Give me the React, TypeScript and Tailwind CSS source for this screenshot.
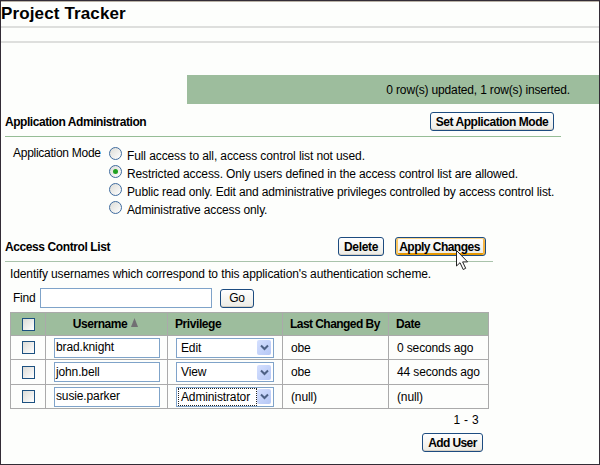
import React from "react";

function Radio({ checked = false }: { checked?: boolean }) {
  return (
    <span className="flex h-[13px] w-[13px] shrink-0 items-center justify-center rounded-full border border-[#3f6b9e] bg-linear-to-br from-[#dcdcd7] to-white">
      {checked && <span className="h-[5px] w-[5px] rounded-full bg-[#21a121]" />}
    </span>
  );
}

function Check() {
  return <span className="block h-[13px] w-[13px] border border-[#1c5180] bg-linear-to-br from-[#dcdcd7] to-white" />;
}

function Button({ className, children, hot = false }: { className: string; children: React.ReactNode; hot?: boolean }) {
  return (
    <button
      className={`flex shrink-0 items-center justify-center rounded-[3px] border border-[#1d4c80] whitespace-nowrap bg-linear-to-b from-white to-[#ecebe5] ${
        hot ? "shadow-[inset_0_1px_0_#fbd58b,inset_2px_0_0_#fac761,inset_-2px_0_0_#f5b544,inset_0_-2px_0_#e59700]" : "shadow-[inset_0_-1px_0_#d6d0c5]"
      } ${className}`}
    >
      {children}
    </button>
  );
}

function Select({ value, focused = false }: { value: string; focused?: boolean }) {
  return (
    <div className="flex h-5 w-[98px] items-center justify-between border border-[#7fa3c9] bg-white pr-[2px] pl-px">
      <span
        className={`flex h-[18px] w-[79px] items-center border border-dotted pl-[2px] whitespace-nowrap ${
          focused ? "border-[#222]" : "border-transparent"
        }`}
      >
        {value}
      </span>
      <span className="flex h-[15px] w-[14px] items-center justify-center rounded-[2px] bg-linear-to-br from-[#d5e0ff] to-[#b5c7f5]">
        <svg width="9" height="7" viewBox="0 0 9 7" fill="none" stroke="#4d6185" strokeWidth="2">
          <path d="M1 1.5 4.5 5 8 1.5" />
        </svg>
      </span>
    </div>
  );
}

const modes = [
  { label: "Full access to all, access control list not used.", tracking: "tracking-[-0.1px]" },
  { label: "Restricted access. Only users defined in the access control list are allowed.", tracking: "tracking-[-0.12px]", checked: true },
  { label: "Public read only. Edit and administrative privileges controlled by access control list.", tracking: "tracking-[-0.14px]" },
  { label: "Administrative access only.", tracking: "tracking-[-0.13px]" },
];

const users = [
  { name: "brad.knight", privilege: "Edit", by: "obe", date: "0 seconds ago" },
  { name: "john.bell", privilege: "View", by: "obe", date: "44 seconds ago" },
  { name: "susie.parker", privilege: "Administrator", by: "(null)", date: "(null)", focused: true },
];

const columns = "grid grid-cols-[35px_122px_115px_106px_100px]";

export default function App() {
  return (
    <div className="h-[465px] w-[600px] overflow-hidden border border-[#332c36] bg-[#fdfefc] font-['Liberation_Sans',Arial,sans-serif] text-[12px] leading-[14px] tracking-[-0.13px] text-black">
      <header className="border-t border-[#b9b2a6]">
        <h1 className="h-[24px] text-[17px] leading-[24px] font-bold tracking-[0.13px]">Project Tracker</h1>
        <div className="h-[17px] border-y-2 border-[#dedfdd]" />
      </header>

      <div className="mt-[32px] ml-[186px] flex h-[29px] items-center justify-end bg-[#9dbd9d] pr-[29px]">
        <span className="tracking-[-0.16px]">0 row(s) updated, 1 row(s) inserted.</span>
      </div>

      <section className="ml-1 w-[556px]">
        <div className="flex h-[33px] items-center justify-between border-b border-[#96bd96] pt-[3px] pr-[7px]">
          <h2 className="pt-px font-bold tracking-[-0.45px]">Application Administration</h2>
          <Button className="h-[19px] w-[124px] pt-px font-bold tracking-[-0.45px]">Set Application Mode</Button>
        </div>
        <div className="flex pt-[9px] pl-2">
          <span className="w-[96px] shrink-0 tracking-[-0.27px]">Application Mode</span>
          <div className="flex flex-col">
            {modes.map((m) => (
              <label key={m.label} className="flex h-[18px] items-start gap-[5px] pt-px whitespace-nowrap">
                <Radio checked={m.checked} />
                <span className={`pt-[2px] ${m.tracking}`}>{m.label}</span>
              </label>
            ))}
          </div>
        </div>
      </section>

      <section className="ml-1 w-[488px]">
        <div className="mt-[18px] flex h-[26px] items-start border-b border-[#a9c3ab] pr-[7px]">
          <h2 className="mt-[4px] flex-1 font-bold tracking-[-0.4px]">Access Control List</h2>
          <div className="flex pt-px">
            <Button className="h-[19px] w-[46px] font-bold tracking-[-0.3px]">Delete</Button>
            <div className="relative ml-[11px]">
              <Button hot className="h-[19px] w-[91px] pr-[2px] font-bold tracking-[-0.52px]">Apply Changes</Button>
              <svg className="absolute top-[13px] left-[61px]" width="13" height="21" viewBox="0 0 13 21">
                <path d="M.5.5v15.5l3.5-3.3 3.2 6.8 2.5-1.2-3.1-6.4h5z" fill="white" stroke="#222" />
              </svg>
            </div>
          </div>
        </div>
        <p className="mt-[5px] pl-[5px] tracking-[-0.11px] whitespace-nowrap">Identify usernames which correspond to this application's authentication scheme.</p>
        <div className="mt-[7px] flex h-5 items-center pl-2">
          <label className="w-[27px] tracking-[-0.25px]">Find</label>
          <span className="h-5 w-[172px] border border-[#7fa3c9] bg-white" />
          <Button className="ml-2 h-[19px] w-[34px]">Go</Button>
        </div>

        <div className="mt-1 ml-[5px] w-[479px] border-t border-l border-[#aaa]">
          <div className={`${columns} h-[23px] bg-[#9dbd9d] font-bold tracking-[-0.42px] *:flex *:items-center *:border-r *:border-b *:border-[#aaa]`}>
            <div className="justify-center"><Check /></div>
            <div className="justify-center gap-1 pr-[2px]">
              Username
              <svg className="mb-[3px]" width="7" height="9" viewBox="0 0 7 9"><path d="M3.5 0 7 9H0z" fill="#716f73" /></svg>
            </div>
            <div className="pl-[7px]">Privilege</div>
            <div className="pl-[7px] tracking-[-0.55px]">Last Changed By</div>
            <div className="pl-[7px]">Date</div>
          </div>
          {users.map((u, i) => (
            <div key={u.name} className={`${columns} ${i === 1 ? "h-[25px]" : "h-[24px]"} *:flex *:items-center *:border-r *:border-b *:border-[#aaa]`}>
              <div className="justify-center"><Check /></div>
              <div className="pl-2">
                <span className="flex h-5 w-[106px] items-center border border-[#7fa3c9] bg-white pb-px pl-px">{u.name}</span>
              </div>
              <div className="pl-2"><Select value={u.privilege} focused={u.focused} /></div>
              <div className="pl-2">{u.by}</div>
              <div className="pl-2">{u.date}</div>
            </div>
          ))}
        </div>
        <div className="mt-[4px] pr-[14px] text-right tracking-[0.3px]">1 - 3</div>
        <div className="mt-[6px] flex justify-end pr-[10px]">
          <Button className="h-[19px] w-[61px] font-bold tracking-[-0.6px]">Add User</Button>
        </div>
      </section>
    </div>
  );
}
